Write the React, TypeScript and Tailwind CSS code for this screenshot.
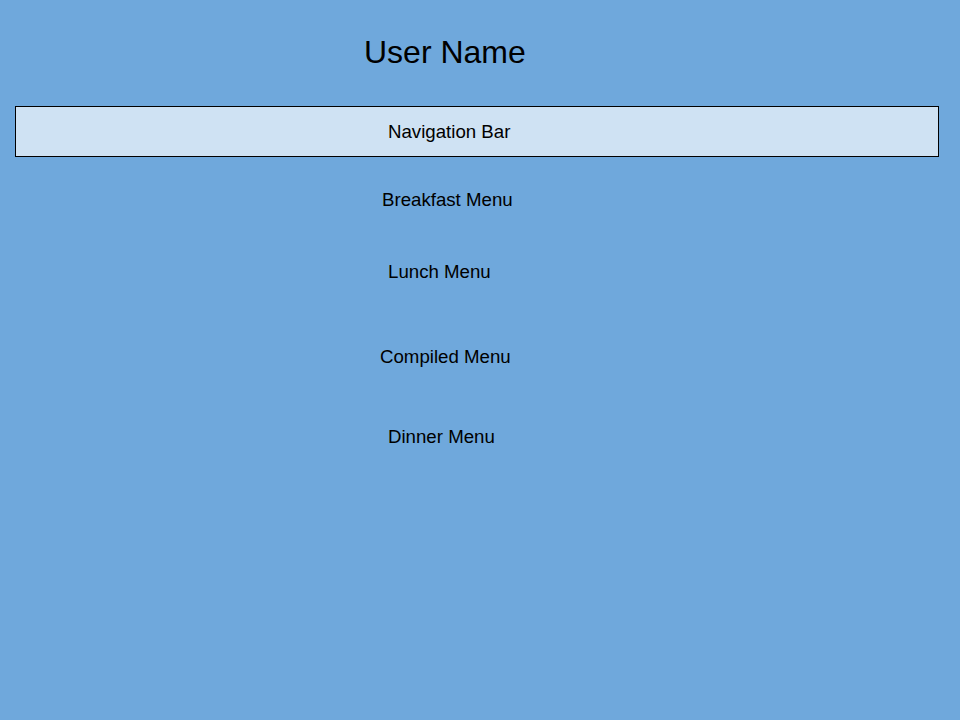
import React from 'react';

const menus = [
  { label: 'Breakfast Menu', className: 'mt-[33px] ml-[382px]' },
  { label: 'Lunch Menu', className: 'mt-[52px] ml-[388px]' },
  { label: 'Compiled Menu', className: 'mt-[65px] ml-[380px]' },
  { label: 'Dinner Menu', className: 'mt-[60px] ml-[388px]' },
];

export default function App() {
  return (
    <div className="w-[960px] h-[720px] bg-[#6fa8dc] text-black font-['Liberation_Sans',Arial,sans-serif] overflow-hidden">
      <div className="pt-[36px] pl-[364px]">
        <h1 className="text-[32px] leading-[32px]">User Name</h1>
      </div>

      <nav className="mt-[38px] ml-[15px] w-[924px] h-[51px] bg-[#cfe2f3] border border-black flex items-center pl-[372px]">
        <span className="text-[18.67px] leading-[20px]">Navigation Bar</span>
      </nav>

      <div className="flex flex-col items-start">
        {menus.map(menu => (
          <div key={menu.label} className={`text-[18.67px] leading-[20px] ${menu.className}`}>
            {menu.label}
          </div>
        ))}
      </div>
    </div>
  );
}
